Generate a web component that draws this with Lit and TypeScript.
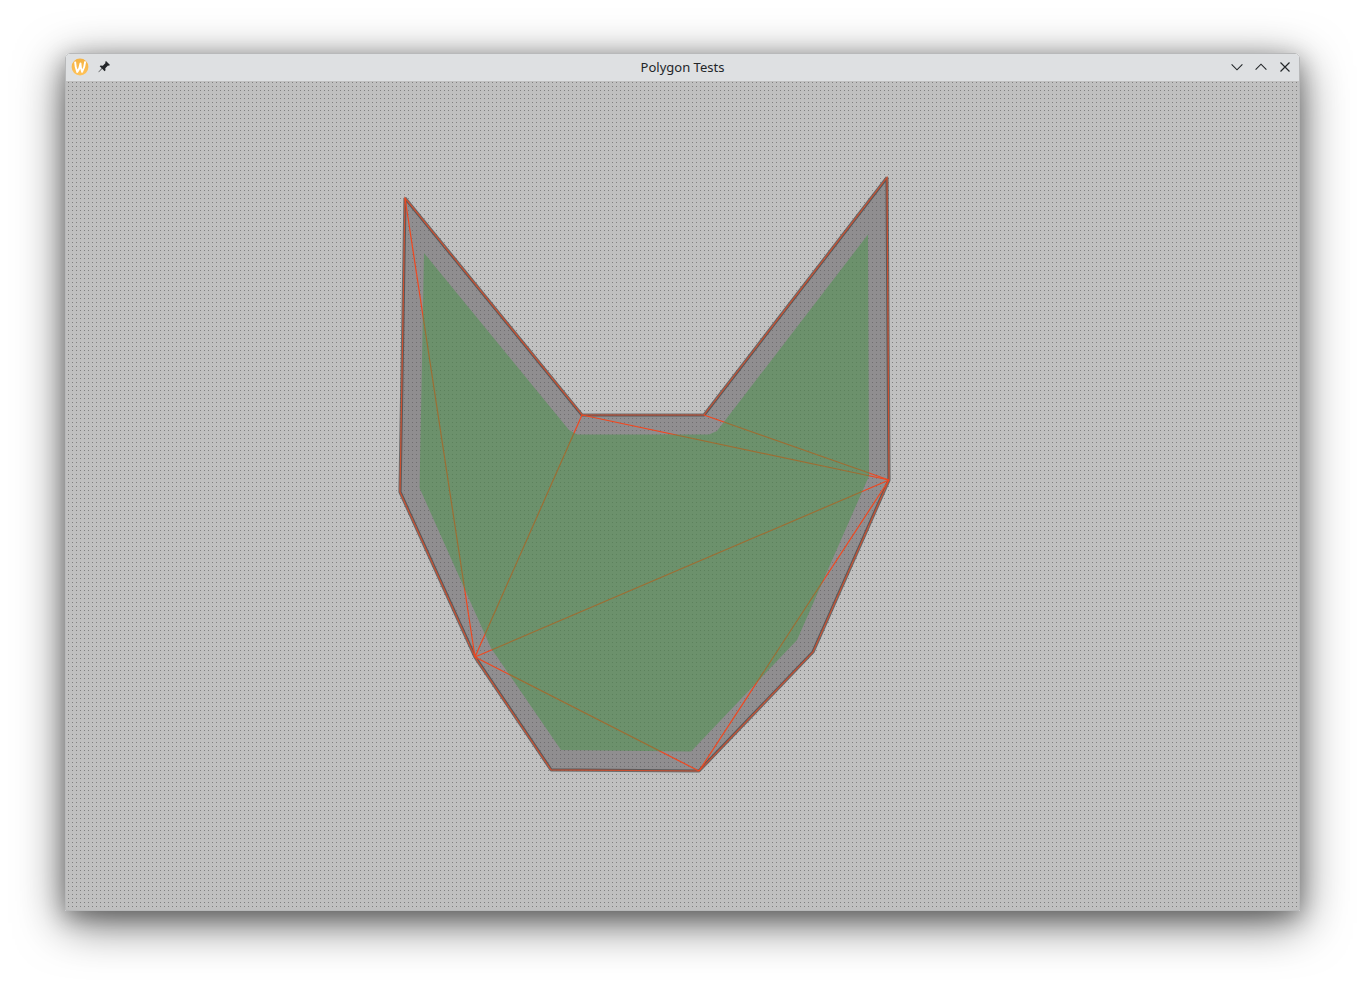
import { LitElement, html, css, svg } from "lit";
import { customElement } from "lit/decorators.js";

type Point = [number, number];

const outline: Point[] = [
  [405, 198], [582, 415], [704, 415], [887, 177.5], [889, 480],
  [813, 652], [699, 771], [551, 769.8], [475, 657], [400, 492],
];

const inset: Point[] = [
  [424, 253], [569, 430], [577, 434.5], [709, 434.5], [717, 431], [868, 234.5],
  [869, 476], [797, 640], [691, 751.5], [561, 750], [491, 648], [419.6, 488],
];

const diagonals: [number, number][] = [
  [0, 8], [1, 8], [1, 4], [2, 4], [8, 4], [8, 6], [6, 4],
];

const points = (list: Point[]) => list.map((p) => p.join(",")).join(" ");

@customElement("polygon-canvas")
class PolygonCanvas extends LitElement {
  static styles = css`
    :host { display: block; background: #c0c0c0; overflow: hidden; }
    svg { display: block; width: 100%; height: 100%; }
    .area { fill: #605c60; fill-opacity: 0.5; }
    .edge { fill: none; stroke: #404040; stroke-opacity: 0.66; stroke-width: 3.2; stroke-linejoin: bevel; }
    .mesh { fill: none; stroke: #f04820; stroke-width: 1.2; }
    .rim { fill: none; stroke: #dc4c28; stroke-width: 1.2; stroke-opacity: 0.85; }
    .inset { fill: #489448; fill-opacity: 0.5; }
    .dot { fill: #808080; }
  `;

  render() {
    return html`<svg viewBox="66 81 1233 829" preserveAspectRatio="none">
      <defs>
        <pattern id="grid" x="68" y="82" width="4" height="4" patternUnits="userSpaceOnUse">
          <rect class="dot" width="1" height="1"></rect>
        </pattern>
      </defs>
      <rect x="66" y="81" width="1233" height="829" fill="url(#grid)"></rect>
      <polygon class="area" points=${points(outline)}></polygon>
      <polygon class="edge" points=${points(outline)}></polygon>
      <polygon class="rim" points=${points(outline)}></polygon>
      ${diagonals.map(([a, b]) => svg`<line class="mesh"
        x1=${outline[a][0]} y1=${outline[a][1]} x2=${outline[b][0]} y2=${outline[b][1]}></line>`)}
      <polygon class="inset" points=${points(inset)}></polygon>
    </svg>`;
  }
}

@customElement("title-bar")
class TitleBar extends LitElement {
  static styles = css`
    :host {
      display: grid; grid-template-columns: 1fr auto 1fr; align-items: center;
      background: #dee0e2; color: #232629; padding: 0 6px 1px;
      font: 13px/20px "Noto Sans", sans-serif;
    }
    .group { display: flex; gap: 8px; }
    .end { justify-content: flex-end; }
    svg { display: block; width: 16px; height: 16px; overflow: visible; }
    .line { fill: none; stroke: #232629; stroke-width: 1.15; }
  `;

  render() {
    return html`
      <div class="group">
        <svg viewBox="0 0 16 16">
          <defs><linearGradient id="w" x1="0" y1="0" x2="0" y2="1">
            <stop offset="0" stop-color="#f5b240"></stop><stop offset="1" stop-color="#ffc35a"></stop>
          </linearGradient></defs>
          <circle cx="8" cy="8" r="8.4" fill="url(#w)"></circle>
          <path d="M3.1 2.6 Q3.3 8.5 5.3 13 Q7.6 10.2 8.5 4.4 Q8.6 9.5 10.1 12.8 Q12.8 8.4 13.2 2.4"
            fill="none" stroke="#fff" stroke-width="1.9" stroke-linejoin="round"></path>
        </svg>
        <svg viewBox="0 0 16 16">
          <path d="M10 2 L14 6 L12.8 6.8 L12 6.5 L9.3 9.2 L9.5 11.3 L8.6 12.2 L6.2 9.8 L2.7 13.3 L2.4 13 L5.7 9.3 L3.7 7.2 L4.6 6.4 L6.8 6.7 L9.5 4 L9.2 3 Z" fill="#232629"></path>
        </svg>
      </div>
      <span>Polygon Tests</span>
      <div class="group end">
        <svg viewBox="0 0 16 16"><path class="line" d="M2.6 5.4 L8 10.8 L13.4 5.4"></path></svg>
        <svg viewBox="0 0 16 16"><path class="line" d="M2.6 10.6 L8 5.2 L13.4 10.6"></path></svg>
        <svg viewBox="0 0 16 16"><path class="line" d="M3.5 3.5 L12.5 12.5 M12.5 3.5 L3.5 12.5"></path></svg>
      </div>`;
  }
}

@customElement("app-root")
class AppRoot extends LitElement {
  static styles = css`
    :host { display: block; box-sizing: border-box; width: 1365px; height: 988px; padding: 53px 65px 77px; background: #fff; overflow: hidden; }
    .window {
      box-sizing: border-box; height: 858px; display: grid; grid-template-rows: 27px 1fr;
      border: 1px solid #b8b9ba; border-radius: 5px 5px 0 0; overflow: hidden;
      box-shadow: 0 12px 48px rgba(0, 0, 0, 0.6), 0 6px 22px rgba(0, 0, 0, 0.3);
    }
  `;

  render() {
    return html`<div class="window">
      <title-bar></title-bar>
      <polygon-canvas></polygon-canvas>
    </div>`;
  }
}
